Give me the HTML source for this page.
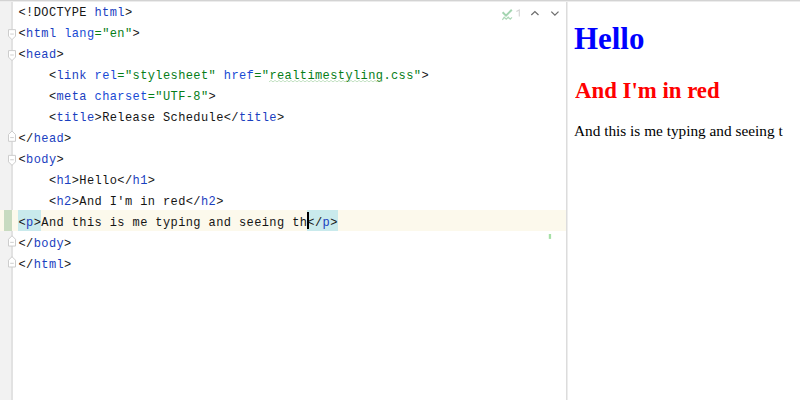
<!DOCTYPE html>
<html><head><meta charset="utf-8">
<style>
html,body{margin:0;padding:0;width:800px;height:400px;overflow:hidden;background:#fff;}
#gut{position:absolute;left:0;top:0;width:11px;height:400px;background:#f2f2f2;}
#gutline{position:absolute;left:11px;top:0;width:2px;height:400px;background:#e2e2e2;}
#topb{position:absolute;left:0;top:0;width:800px;height:1px;background:#d3d3d3;}
#topb2{position:absolute;left:0;top:1px;width:800px;height:1px;background:#ececec;}
#div1{position:absolute;left:566px;top:0;width:1px;height:400px;background:#dcdcdc;}
#div2{position:absolute;left:567px;top:0;width:1px;height:400px;background:#ededed;}
#curline{position:absolute;left:0;top:210px;width:566px;height:21px;background:#fcf9ec;}
#chg{position:absolute;left:3.5px;top:210px;width:8px;height:21px;background:#c8dbc0;}
.ln{transform:translateY(2.7px) scaleY(1.1);transform-origin:0 13.7px;position:absolute;left:18.5px;height:21px;line-height:21px;white-space:pre;font-family:"Liberation Mono",monospace;font-size:12px;letter-spacing:0.4px;color:#151515;}
.ln span.t{color:#1a40bf;}
.ln span.a{color:#174ad4;}
.ln span.v{color:#067d17;}
.hl{position:absolute;top:210px;height:21px;background:#c9eaec;}
#caret{position:absolute;left:307px;top:212px;width:2px;height:17px;background:#000;}
.pv{position:absolute;left:575px;margin:0;white-space:nowrap;font-family:"Liberation Serif",serif;}
</style></head><body>
<div id="gut"></div><div id="gutline"></div>
<div id="curline"></div><div id="chg"></div>
<div class="hl" style="left:18px;width:22.8px"></div>
<div class="hl" style="left:307px;width:31px"></div>
<div class="ln" style="top:-0.4px">&lt;!DOCTYPE <span class="t">html</span>&gt;</div>
<div class="ln" style="top:20.55px">&lt;<span class="t">html</span> <span class="a">lang</span><span class="v">="en"</span>&gt;</div>
<div class="ln" style="top:41.5px">&lt;<span class="t">head</span>&gt;</div>
<div class="ln" style="top:63.45px">    &lt;<span class="t">link</span> <span class="a">rel</span><span class="v">="stylesheet"</span> <span class="a">href</span><span class="v">="realtimestyling.css"</span>&gt;</div>
<div class="ln" style="top:84.4px">    &lt;<span class="t">meta</span> <span class="a">charset</span><span class="v">="UTF-8"</span>&gt;</div>
<div class="ln" style="top:105.35px">    &lt;<span class="t">title</span>&gt;Release Schedule&lt;/<span class="t">title</span>&gt;</div>
<div class="ln" style="top:126.3px">&lt;/<span class="t">head</span>&gt;</div>
<div class="ln" style="top:147.25px">&lt;<span class="t">body</span>&gt;</div>
<div class="ln" style="top:168.2px">    &lt;<span class="t">h1</span>&gt;Hello&lt;/<span class="t">h1</span>&gt;</div>
<div class="ln" style="top:189.15px">    &lt;<span class="t">h2</span>&gt;And I'm in red&lt;/<span class="t">h2</span>&gt;</div>
<div class="ln" style="top:210.1px">&lt;<span class="t">p</span>&gt;And this is me typing and seeing th&lt;/<span class="t">p</span>&gt;</div>
<div class="ln" style="top:231.05px">&lt;/<span class="t">body</span>&gt;</div>
<div class="ln" style="top:252px">&lt;/<span class="t">html</span>&gt;</div>
<div id="caret"></div>
<svg id="ov" width="800" height="400" style="position:absolute;left:0;top:0"><polygon points="8.5,29.65 15.5,29.65 15.5,36.15 12,39.65 8.5,36.15" fill="#fff" stroke="#cdcdcd" stroke-width="1"/><line x1="10.2" y1="34.05" x2="13.8" y2="34.05" stroke="#cacaca" stroke-width="0.9"/><polygon points="8.5,50.60 15.5,50.60 15.5,57.10 12,60.60 8.5,57.10" fill="#fff" stroke="#cdcdcd" stroke-width="1"/><line x1="10.2" y1="55.00" x2="13.8" y2="55.00" stroke="#cacaca" stroke-width="0.9"/><polygon points="12,131.00 15.5,134.50 15.5,141.30 8.5,141.30 8.5,134.50" fill="#fff" stroke="#cdcdcd" stroke-width="1"/><line x1="10.2" y1="137.60" x2="13.8" y2="137.60" stroke="#cacaca" stroke-width="0.9"/><polygon points="8.5,155.35 15.5,155.35 15.5,161.85 12,165.35 8.5,161.85" fill="#fff" stroke="#cdcdcd" stroke-width="1"/><line x1="10.2" y1="159.75" x2="13.8" y2="159.75" stroke="#cacaca" stroke-width="0.9"/><polygon points="12,235.75 15.5,239.25 15.5,246.05 8.5,246.05 8.5,239.25" fill="#fff" stroke="#cdcdcd" stroke-width="1"/><line x1="10.2" y1="242.35" x2="13.8" y2="242.35" stroke="#cacaca" stroke-width="0.9"/><polygon points="12,256.70 15.5,260.20 15.5,267.00 8.5,267.00 8.5,260.20" fill="#fff" stroke="#cdcdcd" stroke-width="1"/><line x1="10.2" y1="263.30" x2="13.8" y2="263.30" stroke="#cacaca" stroke-width="0.9"/><polyline points="269.0,81.9 271.0,80.4 273.0,81.9 275.0,80.4 277.0,81.9 279.0,80.4 281.0,81.9 283.0,80.4 285.0,81.9 287.0,80.4 289.0,81.9 291.0,80.4 293.0,81.9 295.0,80.4 297.0,81.9 299.0,80.4 301.0,81.9 303.0,80.4 305.0,81.9 307.0,80.4 309.0,81.9 311.0,80.4 313.0,81.9 315.0,80.4 317.0,81.9 319.0,80.4 321.0,81.9 323.0,80.4 325.0,81.9 327.0,80.4 329.0,81.9 331.0,80.4 333.0,81.9 335.0,80.4 337.0,81.9 339.0,80.4 341.0,81.9 343.0,80.4 345.0,81.9 347.0,80.4 349.0,81.9 351.0,80.4 353.0,81.9 355.0,80.4 357.0,81.9 359.0,80.4 361.0,81.9 363.0,80.4 365.0,81.9 367.0,80.4 369.0,81.9 371.0,80.4 373.0,81.9 375.0,80.4 377.0,81.9 379.0,80.4 381.0,81.9 383.0,80.4" fill="none" stroke="#b5d9b5" stroke-width="0.8"/><polyline points="502.6,12.2 506,15.6 511.8,9.8" fill="none" stroke="#a3d4b0" stroke-width="2"/><polyline points="502.4,19.9 504.2,17.1 506.2,19.1 508.2,17.2 510.2,19.1 512,17.3" fill="none" stroke="#acd8b7" stroke-width="1.2"/><path d="M516.4 11.6 L519.3 9.9 L519.3 16.6" fill="none" stroke="#d4d4d4" stroke-width="1.15" stroke-linejoin="miter"/><polyline points="531.3,15.0 534.9,11.6 538.5,15.0" fill="none" stroke="#6e6e6e" stroke-width="1.3"/><polyline points="551.3,11.6 554.9,15.1 558.5,11.6" fill="none" stroke="#6e6e6e" stroke-width="1.3"/><rect x="548.8" y="234" width="2.3" height="4.9" fill="#a6e0a6"/></svg>
<div id="div1"></div><div id="div2"></div>
<div id="topb"></div><div id="topb2"></div>
<h1 class="pv" style="left:574.4px;top:20.2px;color:#0000ff;font-size:31px;line-height:37px;transform:scaleX(0.997);transform-origin:0 0;">Hello</h1>
<h2 class="pv" style="top:76px;color:#ff0000;font-size:24px;line-height:28px;transform:scaleX(0.950);transform-origin:0 0;">And I'm in red</h2>
<p class="pv" style="left:574.2px;top:121.6px;color:#000;font-size:15px;line-height:18px;transform:scaleX(1.020);transform-origin:0 0;">And this is me typing and seeing t</p>
</body></html>
